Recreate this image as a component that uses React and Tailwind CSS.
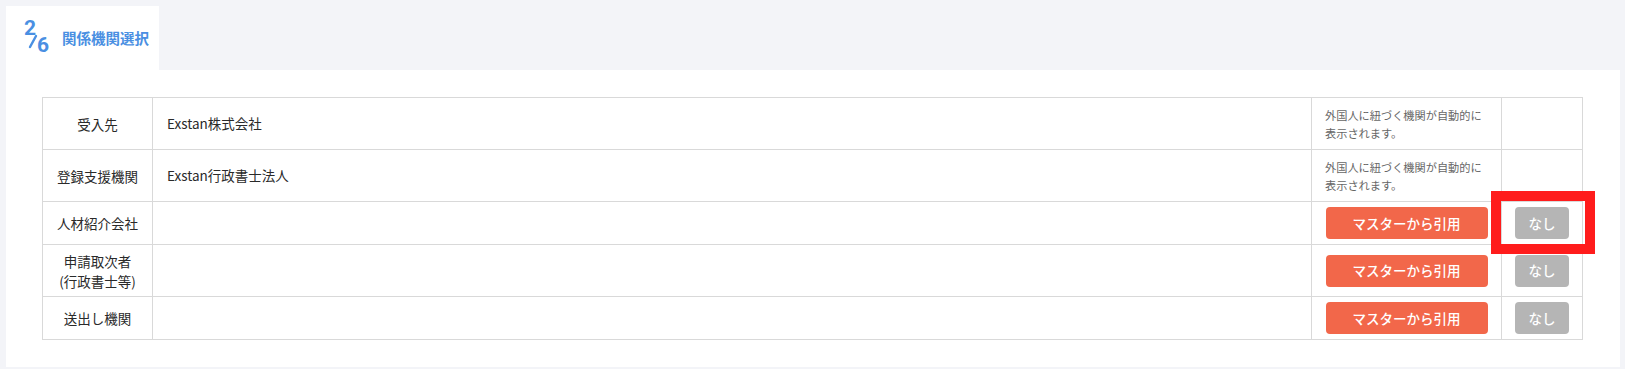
import React from "react";

const rows = [
  { label: ["受入先"], value: "Exstan株式会社", note: true, h: "h-[52px]" },
  { label: ["登録支援機関"], value: "Exstan行政書士法人", note: true, h: "h-[52px]" },
  { label: ["人材紹介会社"], value: "", note: false, h: "h-[43px]" },
  { label: ["申請取次者", "(行政書士等)"], value: "", note: false, h: "h-[52px]" },
  { label: ["送出し機関"], value: "", note: false, h: "h-[43px]" },
];

export default function App() {
  return (
    <div
      className="relative w-full h-[369px] bg-[#f3f4f8] pt-[6px] pl-[6px] pr-[5px] flex flex-col"
      style={{ fontFamily: '"Noto Sans CJK JP", "Noto Sans", sans-serif' }}
    >
      <div className="w-[153px] h-[64px] bg-white flex items-center pl-[18px]">
        <div
          className="relative w-[28px] h-[40px] text-[#4a8fe2] font-bold"
          style={{ fontFamily: 'Roboto, "Noto Sans", sans-serif' }}
        >
          <span className="absolute left-[0px] top-[0px] text-[21px] leading-[21px]">2</span>
          <svg className="absolute left-0 top-0" width="28" height="40" viewBox="0 0 28 40">
            <line x1="6" y1="29" x2="12" y2="18" stroke="#4a8fe2" strokeWidth="2.4" strokeLinecap="round" />
          </svg>
          <span className="absolute left-[13px] top-[17px] text-[21px] leading-[21px]">6</span>
        </div>
        <span className="ml-[10px] text-[14.5px] font-bold text-[#4a8fe2]">関係機関選択</span>
      </div>
      <div className="bg-white h-[297px] pt-[27px] pl-[36px] pr-[37px]">
        <table className="w-full table-fixed border-collapse text-[13.5px] text-[#2a2a2a]">
          <colgroup>
            <col className="w-[110px]" />
            <col />
            <col className="w-[190px]" />
            <col className="w-[81px]" />
          </colgroup>
          <tbody>
            {rows.map((r, i) => (
              <tr key={i} className={r.h}>
                <td className="border border-[#d9d9d9] text-center align-middle leading-[20px] p-0">
                  {r.label.map((l, j) => (
                    <div key={j}>{l}</div>
                  ))}
                </td>
                <td className="border border-[#d9d9d9] align-middle pl-[14px] p-0">{r.value}</td>
                <td className="border border-[#d9d9d9] align-middle p-0">
                  {r.note ? (
                    <div className="pl-[13px] text-[11.2px] leading-[18px] text-[#666]">
                      外国人に紐づく機関が自動的に
                      <br />
                      表示されます。
                    </div>
                  ) : (
                    <div className="flex justify-center">
                      <button className="w-[162px] h-[32px] rounded-[4px] bg-[#f2674a] text-white text-[13.5px] font-medium">
                        マスターから引用
                      </button>
                    </div>
                  )}
                </td>
                <td className="border border-[#d9d9d9] align-middle p-0">
                  {!r.note && (
                    <div className="flex justify-center">
                      <button className="w-[54px] h-[32px] rounded-[4px] bg-[#b5b5b5] text-white text-[13.5px] font-medium">
                        なし
                      </button>
                    </div>
                  )}
                </td>
              </tr>
            ))}
          </tbody>
        </table>
      </div>
      <div className="absolute left-[1491px] top-[191px] w-[104px] h-[63px] border-[10px] border-[#ff1c1c]" />
    </div>
  );
}
